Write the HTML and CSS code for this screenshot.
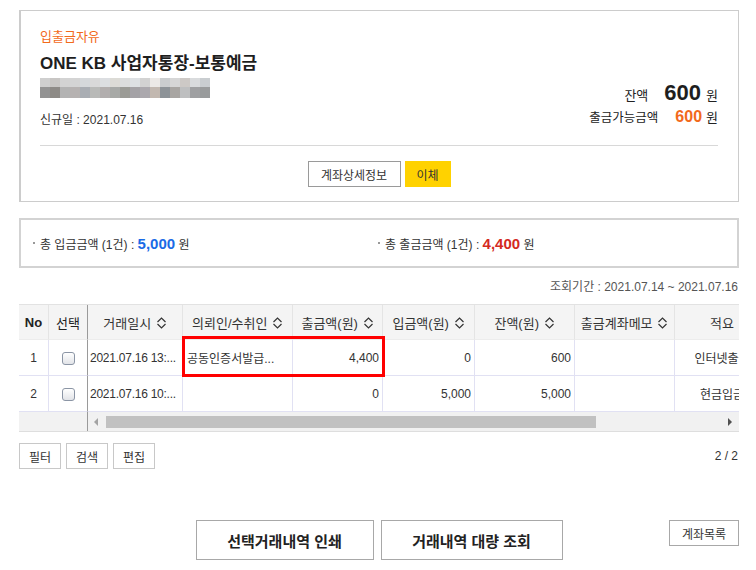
FILE: index.html
```html
<!DOCTYPE html>
<html lang="ko">
<head>
<meta charset="utf-8">
<title>거래내역</title>
<link rel="stylesheet" href="styles.css">
</head>
<body>
<div class="page">
  <section class="card">
    <div class="card-head">
      <div class="acct">
        <div class="acct-type">입출금자유</div>
        <h1 class="acct-name">ONE KB 사업자통장-보통예금</h1>
        <div class="acct-no"><div class="acct-no-top"></div><div class="acct-no-bot"></div></div>
        <div class="acct-date">신규일 : 2021.07.16</div>
      </div>
      <div class="bal">
        <div class="bal-row"><span class="bal-label">잔액</span><span class="bal-big">600</span><span class="won">원</span></div>
        <div class="bal-row bal-sub"><span class="bal-label">출금가능금액</span><span class="bal-avail">600</span><span class="won">원</span></div>
      </div>
    </div>
    <div class="card-actions">
      <button class="btn-detail" type="button">계좌상세정보</button>
      <button class="btn-transfer" type="button">이체</button>
    </div>
  </section>

  <section class="summary">
    <div class="sum-item"><span class="dot"></span>총 입금금액 (1건) : <b class="amt-in">5,000</b> 원</div>
    <div class="sum-item"><span class="dot"></span>총 출금금액 (1건) : <b class="amt-out">4,400</b> 원</div>
  </section>

  <div class="period">조회기간 : 2021.07.14 ~ 2021.07.16</div>

  <div class="grid-wrap">
    <table class="grid">
      <colgroup>
        <col class="c-no"><col class="c-sel"><col class="c-date"><col class="c-name"><col class="c-out"><col class="c-in"><col class="c-bal"><col class="c-memo"><col class="c-desc">
      </colgroup>
      <thead>
        <tr>
          <th class="th-no">No</th>
          <th class="th-sel">선택</th>
          <th>거래일시 <svg class="sort" viewBox="0 0 11 14"><path d="M1.5 6 L5.5 2 L9.5 6 M1.5 8 L5.5 12 L9.5 8"/></svg></th>
          <th>의뢰인/수취인 <svg class="sort" viewBox="0 0 11 14"><path d="M1.5 6 L5.5 2 L9.5 6 M1.5 8 L5.5 12 L9.5 8"/></svg></th>
          <th>출금액(원) <svg class="sort" viewBox="0 0 11 14"><path d="M1.5 6 L5.5 2 L9.5 6 M1.5 8 L5.5 12 L9.5 8"/></svg></th>
          <th>입금액(원) <svg class="sort" viewBox="0 0 11 14"><path d="M1.5 6 L5.5 2 L9.5 6 M1.5 8 L5.5 12 L9.5 8"/></svg></th>
          <th>잔액(원) <svg class="sort" viewBox="0 0 11 14"><path d="M1.5 6 L5.5 2 L9.5 6 M1.5 8 L5.5 12 L9.5 8"/></svg></th>
          <th>출금계좌메모 <svg class="sort" viewBox="0 0 11 14"><path d="M1.5 6 L5.5 2 L9.5 6 M1.5 8 L5.5 12 L9.5 8"/></svg></th>
          <th>적요</th>
        </tr>
      </thead>
      <tbody>
        <tr>
          <td class="center">1</td>
          <td class="center sel"><span class="chk"></span></td>
          <td class="date"><div class="clip">2021.07.16 13:...</div></td>
          <td class="name"><div class="clip">공동인증서발급...</div></td>
          <td class="right">4,400</td>
          <td class="right">0</td>
          <td class="right">600</td>
          <td></td>
          <td class="center nowrap">인터넷출금</td>
        </tr>
        <tr>
          <td class="center">2</td>
          <td class="center sel"><span class="chk"></span></td>
          <td class="date"><div class="clip">2021.07.16 10:...</div></td>
          <td class="name"></td>
          <td class="right">0</td>
          <td class="right">5,000</td>
          <td class="right">5,000</td>
          <td></td>
          <td class="center nowrap">현금입금</td>
        </tr>
      </tbody>
    </table>
    <div class="hscroll">
      <div class="hs-frozen"></div>
      <div class="hs-track">
        <span class="hs-left"></span>
        <span class="hs-thumb"></span>
        <span class="hs-right"></span>
      </div>
    </div>
    <div class="highlight"></div>
  </div>

  <div class="grid-tools">
    <button class="tool-btn" type="button">필터</button>
    <button class="tool-btn" type="button">검색</button>
    <button class="tool-btn" type="button">편집</button>
    <span class="pager">2 / 2</span>
  </div>

  <div class="bottom-actions">
    <div></div>
    <div class="main-btns">
      <button class="big-btn print" type="button">선택거래내역 인쇄</button>
      <button class="big-btn bulk" type="button">거래내역 대량 조회</button>
    </div>
    <button class="list-btn" type="button">계좌목록</button>
  </div>
</div>
</body>
</html>
```
FILE: styles.css
```css
* { box-sizing: border-box; }
body {
  margin: 0;
  background: #fff;
  color: #333;
  font-family: "Liberation Sans", "Noto Sans CJK KR", sans-serif;
}
.page {
  width: 720px;
  margin-left: 19px;
  padding-top: 10px;
}
button {
  font-family: inherit;
  cursor: pointer;
  margin: 0;
}

/* card */
.card {
  border: 1px solid #cccccc;
  border-left-width: 2px;
  padding: 17px 20px 14px 19px;
}
.card-head {
  display: flex;
  justify-content: space-between;
}
.acct-type {
  color: #f26a1b;
  font-size: 13px;
  line-height: 18px;
}
.acct-name {
  margin: 6px 0 0;
  font-size: 17px;
  line-height: 24px;
  font-weight: bold;
  color: #1e1e1e;
}
.acct-no {
  margin-top: 2px;
  width: 170px;
  height: 20px;
}
.acct-no-top {
  height: 9px;
  background: linear-gradient(to right,
    #cfcfcf 0 10px, #c8c6c4 10px 20px, #d3d3d3 20px 30px, #d4d4d4 30px 40px,
    #d5d8db 40px 50px, #d9d9d9 50px 60px, #dcdee1 60px 70px, #dcdbd6 70px 80px,
    #dcdddd 80px 90px, #dde0e3 90px 100px, #d2d2d2 100px 110px, #ece9e6 110px 120px,
    #cacdcf 120px 130px, #d6d6d6 130px 140px, #cdc9c6 140px 150px, #d9dbdd 150px 160px,
    #c9cdd0 160px 170px);
}
.acct-no-bot {
  height: 11px;
  background: linear-gradient(to right,
    #939393 0 10px, #8d8a86 10px 20px, #b3b3b3 20px 30px, #b6b2b1 30px 40px,
    #a9adb3 40px 50px, #b9bab8 50px 60px, #b2aeae 60px 70px, #a7a9a6 70px 80px,
    #9b9b96 80px 90px, #a4a2a6 90px 100px, #aba8ad 100px 110px, #c2b8b0 110px 120px,
    #8d9398 120px 130px, #a8a5a2 130px 140px, #bebfc0 140px 150px, #9fa0a2 150px 160px,
    #999b9c 160px 170px);
}
.acct-date {
  margin-top: 14px;
  font-size: 12px;
  line-height: 16px;
  color: #333;
}
.bal {
  padding-top: 51px;
}
.bal-row {
  display: flex;
  justify-content: flex-end;
  align-items: baseline;
  height: 28px;
  line-height: 28px;
  font-size: 13px;
  color: #222;
}
.bal-row.bal-sub {
  height: 20px;
  line-height: 20px;
  font-size: 12.5px;
}
.bal-big {
  font-size: 22px;
  font-weight: bold;
  margin-left: 16px;
  color: #1e1e1e;
}
.bal-avail {
  font-size: 16px;
  font-weight: bold;
  color: #f26a1b;
  margin-left: 17px;
}
.won {
  margin-left: 5px;
  font-size: 13px;
}
.bal-sub .won { margin-left: 4px; }

.card-actions {
  margin-top: 17px;
  border-top: 1px solid #d8d8d8;
  padding-top: 15px;
  display: flex;
  justify-content: center;
  gap: 4px;
}
.btn-detail {
  width: 93px;
  height: 26px;
  background: #fff;
  border: 1px solid #9a9a9a;
  font-size: 12px;
  color: #333;
  padding: 0;
}
.btn-transfer {
  width: 46px;
  height: 26px;
  background: #ffd200;
  border: 1px solid #ffd200;
  font-size: 12px;
  color: #333;
  padding: 0;
}

/* summary */
.summary {
  margin-top: 16px;
  border: 2px solid #d3d3d3;
  height: 50px;
  padding-left: 12px;
  display: grid;
  grid-template-columns: 345px 1fr;
  align-items: center;
  font-size: 12px;
  color: #333;
}
.sum-item {
  display: flex;
  align-items: baseline;
  white-space: pre;
}
.dot {
  display: inline-block;
  width: 2px;
  height: 2px;
  background: #999;
  margin-right: 5px;
  align-self: center;
}
.amt-in, .amt-out {
  font-size: 15px;
  font-weight: bold;
}
.amt-in { color: #1a6be6; }
.amt-out { color: #d42a1f; }

.period {
  margin-top: 11px;
  text-align: right;
  font-size: 12px;
  line-height: 16px;
  color: #555;
  padding-right: 1px;
}

/* grid */
.grid-wrap {
  margin-top: 9px;
  position: relative;
  overflow: hidden;
  width: 720px;
}
.grid {
  table-layout: fixed;
  width: 751px;
  border-collapse: separate;
  border-spacing: 0;
  border-top: 1px solid #e2e2e2;
}
.c-no { width: 30px; }
.c-sel { width: 39px; }
.c-date { width: 95px; }
.c-name { width: 110px; }
.c-out { width: 90px; }
.c-in { width: 92px; }
.c-bal { width: 100px; }
.c-memo { width: 100px; }
.c-desc { width: 95px; }
.grid thead tr { height: 35px; }
.grid tbody tr { height: 36px; }
.grid th {
  background: #f4f4f4;
  font-weight: normal;
  font-size: 13px;
  color: #333;
  border-right: 1px solid #e4e4e4;
  border-bottom: 1px solid #ececec;
  padding: 0;
  white-space: nowrap;
  text-align: center;
}
.grid th.th-no { font-weight: bold; color: #222; }
.grid th.th-sel { color: #222; }
.grid th:nth-child(2), .grid td:nth-child(2) { border-right: 1px solid #9a9a9a; }
.sort {
  width: 11px;
  height: 14px;
  vertical-align: -2px;
  margin-left: 1px;
}
.sort path {
  fill: none;
  stroke: #333;
  stroke-width: 1.2;
}
.grid td {
  font-size: 12px;
  color: #333;
  border-right: 1px solid #e1e1f3;
  border-bottom: 1px solid #e1e1f3;
  padding: 0 3px;
}
.grid td.center { text-align: center; }
.grid td.right { text-align: right; }
.grid td.date { padding: 0 0 0 2px; text-align: left; }
.grid td.date .clip { letter-spacing: -0.25px; }
.grid td.name { padding: 0 0 0 4px; text-align: left; }
.nowrap { white-space: nowrap; overflow: hidden; }
.clip {
  white-space: nowrap;
  overflow: hidden;
}
.chk {
  display: inline-block;
  width: 13px;
  height: 13px;
  border: 1px solid #8b95a5;
  border-radius: 3px;
  background: linear-gradient(#ffffff, #e2e4e8);
  vertical-align: middle;
}
.hscroll {
  display: flex;
  height: 20px;
  background: #f1f1f1;
  border-bottom: 1px solid #dedede;
}
.hs-frozen {
  width: 69px;
  border-right: 1px solid #9a9a9a;
  background: #f2f2f2;
}
.hs-track {
  flex: 1;
  display: flex;
  align-items: center;
  padding: 0 6px 0 6px;
}
.hs-left {
  width: 0;
  height: 0;
  border-top: 4px solid transparent;
  border-bottom: 4px solid transparent;
  border-right: 4px solid #a3a3a3;
}
.hs-thumb {
  margin-left: 8px;
  width: 490px;
  height: 12px;
  background: #c1c1c1;
}
.hs-right {
  margin-left: auto;
  margin-right: 1px;
  width: 0;
  height: 0;
  border-top: 4px solid transparent;
  border-bottom: 4px solid transparent;
  border-left: 4px solid #505050;
}
.highlight {
  position: absolute;
  left: 163px;
  top: 32px;
  width: 203px;
  height: 41px;
  border: 3px solid #ff0000;
  pointer-events: none;
}

/* tools */
.grid-tools {
  margin-top: 11px;
  display: flex;
  align-items: center;
  gap: 5px;
}
.tool-btn {
  width: 42px;
  height: 26px;
  background: #fff;
  border: 1px solid #c8c8c8;
  font-size: 12px;
  color: #333;
  padding: 0;
}
.pager {
  margin-left: auto;
  font-size: 12px;
  color: #333;
  padding-right: 1px;
}

/* bottom */
.bottom-actions {
  margin-top: 51px;
  display: grid;
  grid-template-columns: 1fr auto 1fr;
  align-items: start;
}
.main-btns {
  display: flex;
  gap: 7px;
}
.big-btn {
  height: 40px;
  background: #fff;
  border: 1px solid #a8a8a8;
  font-size: 15px;
  font-weight: bold;
  color: #222;
  padding: 0;
}
.big-btn.print { width: 178px; }
.big-btn.bulk { width: 182px; }
.list-btn {
  justify-self: end;
  width: 70px;
  height: 26px;
  background: #fff;
  border: 1px solid #a8a8a8;
  font-size: 12px;
  color: #333;
  padding: 0;
}
```
